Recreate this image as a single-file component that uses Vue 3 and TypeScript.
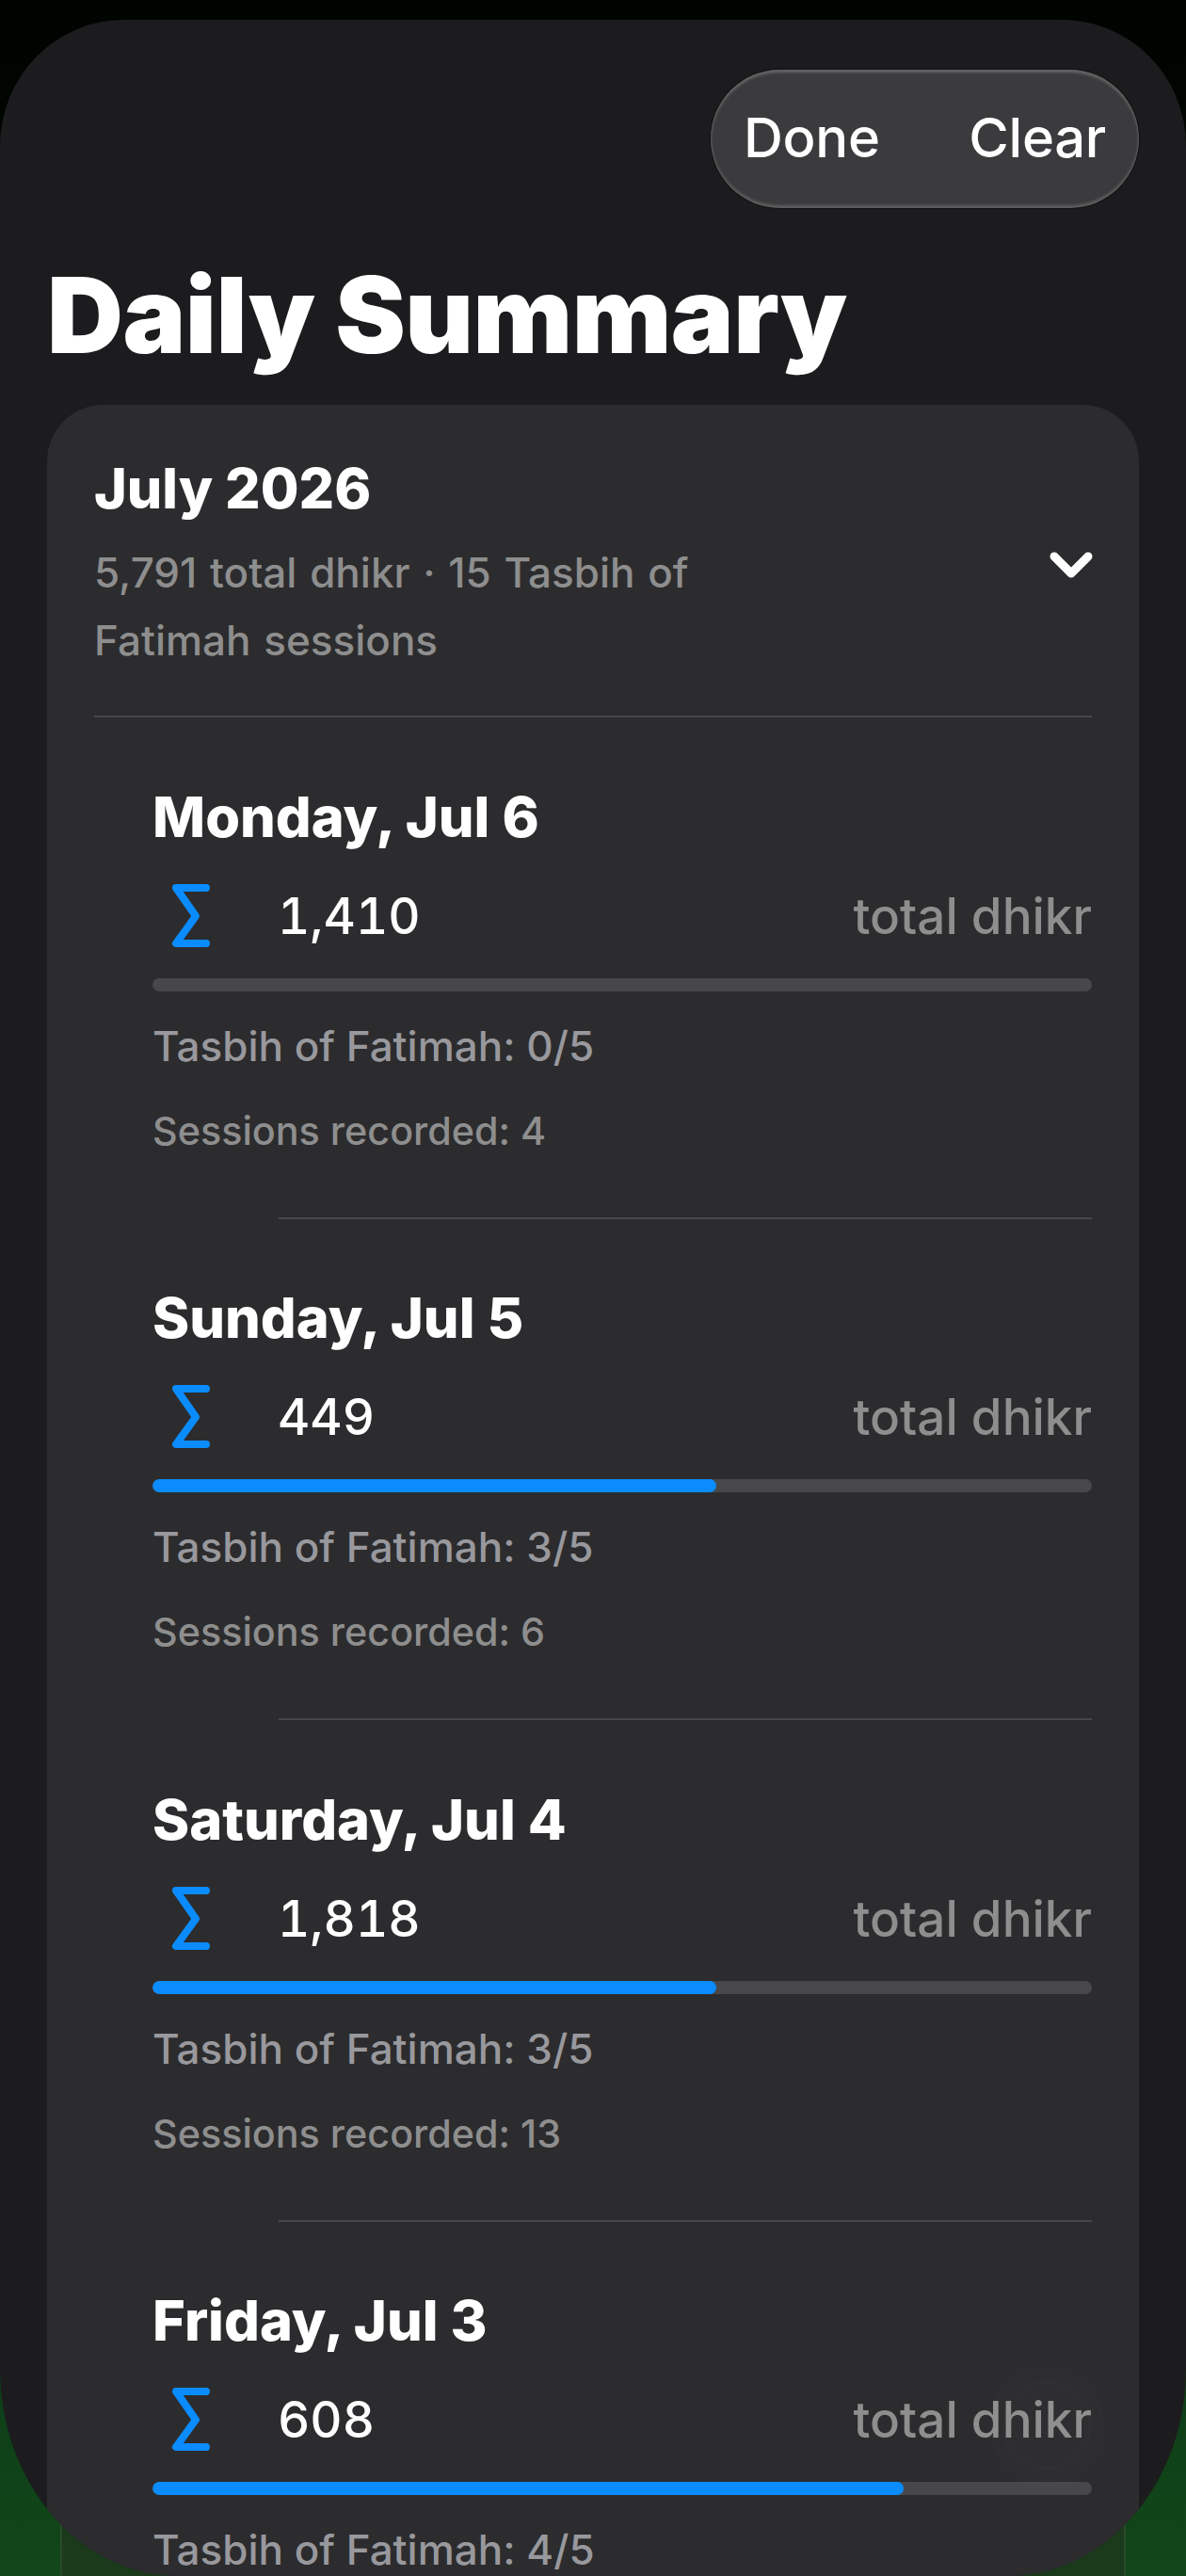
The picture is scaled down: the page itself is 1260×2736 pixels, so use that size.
<script setup lang="ts">
interface Day { date: string; total: string; done: number; sessions: number | null }
const days: Day[] = [
  { date: 'Monday, Jul 6', total: '1,410', done: 0, sessions: 4 },
  { date: 'Sunday, Jul 5', total: '449', done: 3, sessions: 6 },
  { date: 'Saturday, Jul 4', total: '1,818', done: 3, sessions: 13 },
  { date: 'Friday, Jul 3', total: '608', done: 4, sessions: null },
]
</script>

<template>
  <div class="screen">
    <div class="backdrop"></div>
    <div class="sheet">
      <div class="toolbar">
        <div class="pill">
          <span>Done</span>
          <span>Clear</span>
        </div>
      </div>
      <h1 class="title">Daily Summary</h1>
      <section class="card">
        <header class="month">
          <div class="month-text">
            <h2>July 2026</h2>
            <p>5,791 total dhikr · 15 Tasbih of<br />Fatimah sessions</p>
          </div>
          <svg class="chevron" width="48" height="32" viewBox="0 0 48 32" fill="none">
            <path d="M6 7 L24 25 L42 7" stroke="#fff" stroke-width="9" stroke-linecap="round" stroke-linejoin="round" />
          </svg>
        </header>
        <div class="days">
          <article v-for="(d, i) in days" :key="d.date" class="day" :class="{ divided: i > 0 }">
            <h3>{{ d.date }}</h3>
            <div class="stat">
              <svg class="sigma" width="46" height="74" viewBox="0 0 46 74" fill="none">
                <path d="M39 7 H7 L28 37 L7 66 H39" stroke="#0a8cff" stroke-width="8" stroke-linecap="round" stroke-linejoin="round" />
              </svg>
              <span class="num">{{ d.total }}</span>
              <span class="lbl">total dhikr</span>
            </div>
            <div class="bar"><div class="fill" :style="{ width: (d.done / 5) * 100 + '%' }"></div></div>
            <p class="meta">Tasbih of Fatimah: {{ d.done }}/5</p>
            <p v-if="d.sessions !== null" class="meta small">Sessions recorded: {{ d.sessions }}</p>
          </article>
        </div>
      </section>
      <div class="ripple"></div>
    </div>
  </div>
</template>

<style>
html, body { margin: 0; background: #000; }
</style>

<style scoped>
.screen {
  position: relative;
  width: 1260px;
  height: 2736px;
  overflow: hidden;
  background: linear-gradient(#000400 0, #010a03 600px, #0b3016 2200px, #114719 2736px);
  font-family: Inter, "Liberation Sans", sans-serif;
  color: #fff;
}
.backdrop {
  position: absolute;
  left: 64px;
  right: 64px;
  top: 2650px;
  bottom: 0;
  background: #1b3a1c;
  border: 2px solid #2a4a2c;
  border-bottom: 0;
  box-sizing: border-box;
}
.sheet {
  position: absolute;
  inset: 21px 0 0 0;
  background: #1c1c1e;
  border-radius: 132px 132px 190px 190px / 134px 134px 220px 220px;
  overflow: hidden;
  padding: 53px 50px 0;
  box-sizing: border-box;
}
.toolbar { display: flex; justify-content: flex-end; }
.pill {
  width: 455px;
  height: 147px;
  box-sizing: border-box;
  border-radius: 74px;
  background: #3b3b3d;
  box-shadow: inset 0 3px 3px rgba(255, 255, 255, .22), inset 0 -3px 3px rgba(255, 255, 255, .18), 0 0 0 1px #111;
  display: flex;
  justify-content: space-between;
  align-items: center;
  padding: 0 35px 4px;
  font-size: 58px;
  font-weight: 500;
  letter-spacing: -.3px;
}
.title {
  margin: 48px 0 0;
  font-size: 112px;
  line-height: 130px;
  font-weight: 900;
  letter-spacing: -.5px;
}
.card {
  margin-top: 31px;
  background: #2c2c2e;
  border-radius: 60px 60px 0 0;
  padding: 0 50px;
  height: 2400px;
}
.month {
  display: flex;
  justify-content: space-between;
  align-items: center;
  padding: 53px 0 44px;
  border-bottom: 2px solid #48484a;
}
.month h2 { margin: 0; font-size: 59px; line-height: 72px; font-weight: 800; }
.month p {
  margin: 17px 0 0;
  font-size: 44px;
  line-height: 72px;
  font-weight: 500;
  color: #8e8e8e;
  word-spacing: 2px;
}
.chevron { margin-right: -2px; }
.days { padding-left: 62px; margin-top: -2px; }
.day { position: relative; padding-top: 70.5px; height: 532.5px; box-sizing: border-box; }
.day.divided::before {
  content: "";
  position: absolute;
  top: 0;
  left: 134px;
  right: 0;
  height: 2px;
  background: #48484a;
}
.day h3 { margin: 0; font-size: 59.5px; line-height: 72px; font-weight: 800; }
.stat { display: flex; align-items: center; height: 74px; margin-top: 33px; }
.sigma { margin-left: 18px; flex: none; }
.num {
  margin-left: 69px;
  font-size: 53px;
  font-weight: 500;
  font-variant-numeric: tabular-nums;
}
.lbl { margin-left: auto; font-size: 53px; font-weight: 500; color: #8e8e8e; }
.bar { height: 14px; border-radius: 7px; background: #48484b; margin-top: 29px; overflow: hidden; }
.fill { height: 100%; background: #0a8cff; border-radius: 7px; }
.meta { margin: 28px 0 0; font-size: 44px; line-height: 60px; font-weight: 500; color: #98989d; }
.meta.small { margin-top: 30px; font-size: 41.3px; color: #8e8e8e; }
.ripple {
  position: absolute;
  left: 1046px;
  top: 2489px;
  width: 132px;
  height: 132px;
  border-radius: 50%;
  pointer-events: none;
  background: radial-gradient(circle, rgba(255, 255, 255, .012) 0 45px, rgba(255, 255, 255, .03) 46px, rgba(255, 255, 255, .008) 47px 58px, rgba(255, 255, 255, .02) 59px, rgba(255, 255, 255, .004) 60px 66px);
}
</style>
